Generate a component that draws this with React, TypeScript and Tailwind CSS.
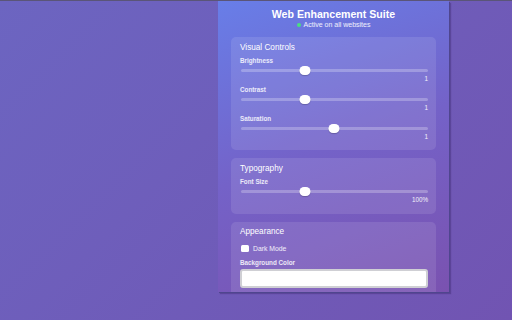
import React from 'react';

type Slider = { label: string; pos: number; value: string };

const visualSliders: Slider[] = [
  { label: 'Brightness', pos: 34.2, value: '1' },
  { label: 'Contrast', pos: 34.2, value: '1' },
  { label: 'Saturation', pos: 49.7, value: '1' },
];

function SliderRow({ s }: { s: Slider }) {
  return (
    <div className="flex flex-col">
      <div className="text-[6.3px] leading-[7px] font-bold text-white/85">{s.label}</div>
      <div className="relative mt-[2px] h-[9px] ml-[1px] flex items-center">
        <div className="h-[3px] w-full rounded-full bg-white/25" />
        {/* thumb */}
        <div
          className="absolute top-0 h-[9px] w-[11px] -translate-x-1/2 rounded-full bg-white shadow-[0_1px_1px_rgba(0,0,0,0.2)]"
          style={{ left: `${s.pos}%` }}
        />
      </div>
      <div className="text-right text-[6.3px] leading-[7px] text-white/90">{s.value}</div>
    </div>
  );
}

function Card({ title, children, className = '' }: { title: string; children: React.ReactNode; className?: string }) {
  return (
    <div className={`rounded-[5px] bg-white/10 px-[9px] pt-[6.5px] pr-[8px] ${className}`}>
      <div className="text-[8.2px] leading-[8px] text-white">{title}</div>
      {children}
    </div>
  );
}

export default function App() {
  return (
    <div
      className="w-[512px] h-[320px] overflow-hidden border-t border-[#5a5578] bg-[linear-gradient(135deg,#6c65c1_0%,#7154b2_100%)]"
      style={{ fontFamily: '"Liberation Sans", Arial, sans-serif' }}
    >
      <div className="ml-[218px] w-[231px] h-[291px] overflow-hidden flex flex-col px-[13px] bg-[linear-gradient(160deg,#687ee8_0%,#7462c8_50%,#7a52b0_100%)] shadow-[1px_1px_0_#4f468e,2px_2px_1px_rgba(60,40,110,0.4)]">
        {/* header */}
        <div className="pt-[7px] flex flex-col items-center">
          <div className="text-[10.6px] leading-[12px] font-bold text-white">Web Enhancement Suite</div>
          <div className="mt-[0.5px] flex items-center text-[7px] leading-[8px] text-white/90">
            <span className="mr-[3px] h-[4px] w-[4px] rounded-full bg-[#4ade80]" />
            Active on all websites
          </div>
        </div>

        <div className="mt-[8px] flex flex-col gap-[8px]">
          <Card title="Visual Controls" className="pb-[10px] pt-[7.5px]">
            <div className="mt-[5px] flex flex-col gap-[4px]">
              {visualSliders.map((s) => (
                <SliderRow key={s.label} s={s} />
              ))}
            </div>
          </Card>

          <Card title="Typography" className="pb-[11px] pt-[7px]">
            <div className="mt-[4.5px]">
              <SliderRow s={{ label: 'Font Size', pos: 34.2, value: '100%' }} />
            </div>
          </Card>

          <Card title="Appearance" className="pb-[10px]">
            <div className="mt-[8.5px] flex items-center">
              <div className="ml-[1px] h-[7px] w-[8px] rounded-[1.5px] bg-white" />
              <span className="ml-[4px] text-[6.8px] leading-[7px] text-white/90">Dark Mode</span>
            </div>
            <div className="mt-[7.5px] text-[6.3px] leading-[7px] font-bold text-white/85">Background Color</div>
            <div className="mt-[3px] h-[19px] rounded-[3px] border-2 border-[#cfcfd4] bg-white" />
          </Card>
        </div>
      </div>
    </div>
  );
}
